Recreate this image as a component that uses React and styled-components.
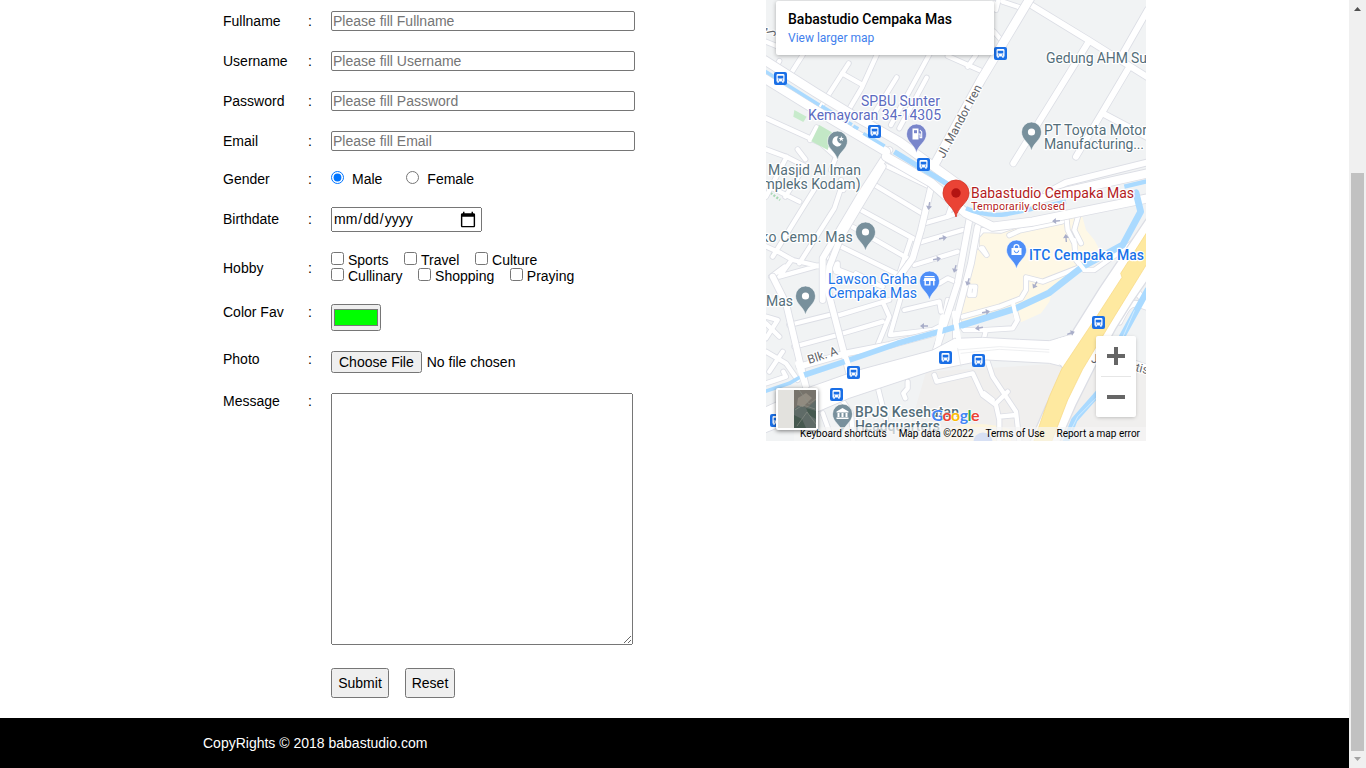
import React from "react";
import styled, { createGlobalStyle } from "styled-components";

const GlobalStyle = createGlobalStyle`
  html, body { margin: 0; padding: 0; height: 100%; overflow: hidden; background: #fff; }
  body, input, textarea, button { font-family: "Liberation Sans", Arial, sans-serif; font-size: 14px; }
`;

const Page = styled.div`
  display: flex;
  width: 1366px;
  height: 768px;
`;
const Content = styled.div`
  flex: 1;
  display: flex;
  flex-direction: column;
`;
const Main = styled.main`
  height: 718px;
  display: flex;
  padding-left: 223px;
  box-sizing: border-box;
`;
const Form = styled.form`
  width: 543px;
  padding-top: 1px;
  box-sizing: border-box;
`;
const Row = styled.div`
  display: grid;
  grid-template-columns: 85px 23px 1fr;
  align-items: start;
  height: ${(p) => p.$height}px;
  line-height: 16px;
  color: #000;
`;
const Label = styled.label`
  padding-top: ${(p) => p.$top}px;
`;
const Field = styled.div`
  padding-top: ${(p) => p.$top}px;
  white-space: nowrap;
`;
const TextInput = styled.input`
  display: block;
  box-sizing: border-box;
  width: 304px;
  height: 20px;
  padding: 0;
  border: 1px solid #767676;
  border-radius: 2px;
  text-indent: 1px;
`;
const DateInput = styled.input`
  display: block;
  box-sizing: border-box;
  width: 151px;
  height: 25px;
  padding: 0 3px 0 0;
  &::-webkit-datetime-edit { position: relative; top: -1px; }
  &::-webkit-calendar-picker-indicator { width: 18px; height: 18px; padding: 0; margin: 0; }
`;
const ColorInput = styled.input`
  display: block;
  box-sizing: border-box;
  width: 50px;
  height: 27px;
  padding: 0;
  &::-webkit-color-swatch-wrapper { padding: 4px 2px; }
`;
const FileInput = styled.input`
  display: block;
  width: 304px;
  height: 22px;
  &::file-selector-button { margin-right: 5px; padding-left: 6px; padding-right: 6px; }
`;
const Message = styled.textarea`
  display: block;
  box-sizing: border-box;
  width: 302px;
  height: 252px;
`;
const Choice = styled.label`
  display: inline-block;
  margin-right: ${(p) => p.$after}px;
  input { margin: 0 ${(p) => p.$gap}px 0 0; vertical-align: ${(p) => p.$raise || 0}px; }
`;
const ChoiceLine = styled.div`
  height: 16px;
`;
const Buttons = styled.div`
  display: flex;
  gap: 16px;
`;
const Button = styled.button`
  height: 30px;
  width: ${(p) => p.$width}px;
  padding: 0;
`;
const Footer = styled.footer`
  height: 50px;
  line-height: 50px;
  background: #000;
  color: #fff;
  padding-left: 203px;
`;

const Scrollbar = styled.aside`
  width: 17px;
  height: 768px;
  background: #f0f0f0;
  display: flex;
  flex-direction: column;
  align-items: center;
  svg { display: block; }
`;
const Thumb = styled.div`
  width: 13px;
  height: 578px;
  margin-top: 156px;
  background: #c1c1c1;
`;

const MapFrame = styled.section`
  position: relative;
  width: 380px;
  height: 441px;
  overflow: hidden;
  font-family: Roboto, sans-serif;
  & > svg { display: block; }
`;
const PlaceCard = styled.div`
  position: absolute;
  left: 10px;
  top: 1px;
  width: 218px;
  height: 54px;
  box-sizing: border-box;
  padding: 10px 12px;
  background: #fff;
  border-radius: 2px;
  box-shadow: 0 1px 4px rgba(0, 0, 0, 0.3);
`;
const PlaceName = styled.div`
  font-size: 14px;
  line-height: 16px;
  font-weight: 500;
  color: #000;
  white-space: nowrap;
`;
const PlaceLink = styled.div`
  margin-top: 3px;
  font-size: 12px;
  line-height: 16px;
  color: #427fed;
`;
const ZoomPanel = styled.div`
  position: absolute;
  left: 330px;
  top: 336px;
  width: 40px;
  height: 81px;
  background: #fff;
  border-radius: 2px;
  box-shadow: 0 1px 4px -1px rgba(0, 0, 0, 0.3);
`;
const Satellite = styled.div`
  position: absolute;
  left: 10px;
  top: 388px;
  width: 38px;
  height: 38px;
  border: 2px solid #fff;
  border-radius: 2px;
  box-shadow: 0 1px 4px rgba(0, 0, 0, 0.5);
  background: #e3e2de;
  svg { display: block; }
`;
const Attribution = styled.div`
  position: absolute;
  right: 0;
  bottom: 0;
  width: 352px;
  height: 14px;
  box-sizing: border-box;
  display: flex;
  justify-content: space-between;
  padding: 0 6px;
  line-height: 14px;
  font-size: 10px;
  color: #000;
  background: rgba(245, 245, 245, 0.7);
  white-space: nowrap;
`;

/* The street geometry is drawn on a 1140 x 1323 grid, three units to a pixel. */
const lanes = [
  "M0 125 L45 143 M40 183 L28 205 M110 165 L72 225",
  "M248 190 L158 330 M228 220 L290 255 M332 165 L288 262 L245 335 M392 232 L322 345 M492 160 L375 375 M482 233 L400 385",
  "M700 -10 L690 30 L684 10 M710 5 L770 25 M684 95 L712 128 M545 168 L645 212 M630 165 L605 200",
  "M0 355 L165 430 L210 470 L195 510 M132 420 L152 382",
  "M0 448 L60 470 L120 500 M95 448 L118 478 M62 470 L0 590 M112 505 L58 590 M0 555 L100 605 M150 560 L100 640 L20 770",
  "M225 565 L205 625 L100 790 M225 540 L232 570",
  "M-5 737 L45 760 L80 780 L165 800 M78 778 L40 830 L165 795 M55 800 L15 830",
  "M345 490 L495 562 M318 550 L468 640 M285 630 L450 720 M250 675 L425 775 M215 735 L400 825",
  "M185 770 L220 810 L350 860 M215 790 L215 815 M270 820 L330 850 L210 815 M190 800 L300 845",
  "M468 672 L545 650 L572 640 M555 620 L545 650 M462 727 L590 690 M445 795 L575 755 M435 715 L400 820",
  "M520 850 L545 835 L580 850 M415 930 L520 905 L525 935 M405 890 L372 1005 L500 990 L530 975 L545 900",
  "M350 905 L370 950 L335 1035 M205 950 L370 900 M70 975 L190 945 M85 1040 L215 1005 M215 1005 L350 965",
  "M0 970 L40 1010 M0 950 L35 960 L0 1015 M0 1055 L60 1090 L95 1140 M50 1055 L10 1115 M0 1150 L60 1130 L52 1115",
  "M650 690 L705 692 L740 680 M632 740 L632 710 L650 690 M650 745 L662 765 L645 745",
  "M730 706 L760 692 L888 665 M900 640 L905 690 L925 730 L930 780 L955 810 L985 810 L1140 700 M940 635 L925 690 L945 730",
  "M945 800 L830 845 L780 832 L780 870 L765 895 L700 920 L590 950 M745 925 L755 960 L740 985 L660 990 L595 990 L575 960 M660 990 L655 1010",
  "M612 860 L628 860 L625 885 L610 885 Z",
  "M505 1125 L512 1145 L620 1120 L650 1185 L690 1215 L700 1260 L700 1323 M665 1085 L680 1130 L750 1235 L760 1323 M725 1175 L688 1212 M700 1250 L750 1245 M655 1180 L680 1200",
  "M425 1145 L425 1165 L412 1180 L418 1195 M335 1160 L345 1200 L360 1260 M225 1195 L255 1240 L262 1323 M170 1240 L200 1323",
];
const streets = [
  "M370 450 L280 590 L170 775 L170 900",
  "M350 500 L225 710 L190 800 L185 870 L250 1120",
  "M495 562 L465 690 L440 775 L400 830",
  "M20 830 L60 910 L100 1080 L130 1200",
  "M100 1100 L240 1060 L370 1035 L500 1000",
  "M610 660 L575 850 L510 1050 M635 680 L615 790 L570 960 L570 1050",
  "M1140 920 C1090 895 1080 925 1060 965 M980 1090 C1040 1075 1090 1080 1145 1105 M1100 860 L1145 915",
  "M795 15 L970 122 L1145 232 M1145 30 L1068 165 M970 122 L742 490 M1090 200 L930 470 M1010 340 L1145 412",
  "M1145 487 L900 548 L840 580",
];
const avenues = [
  "M-5 180 L150 278 L260 345 L400 425 L600 570",
  "M795 -10 L645 240 L505 495",
  "M-5 235 L140 325 L270 402 L360 455",
  "M360 470 L495 548 L600 640 L680 680 L800 665 L1145 595 M1145 520 L900 575 L780 610",
];
const boulevard = "M-5 1222 L120 1165 L270 1112 L500 1050 L565 1015 L650 1012 L760 1018 L850 1022 L925 1000 L890 1100 L850 1090 L660 1080 L500 1112 L250 1195 L150 1238 L-5 1300 Z";

const Roads = ({ paths, width }) => (
  <>
    <g stroke="#dcdee5" strokeWidth={width + 5}>{paths.map((d) => <path key={d} d={d} />)}</g>
    <g stroke="#fff" strokeWidth={width}>{paths.map((d) => <path key={d} d={d} />)}</g>
  </>
);

const BusStop = ({ x, y }) => (
  <g transform={`translate(${x} ${y})`}>
    <rect x="-6.5" y="-6.5" width="13" height="13" rx="2" fill="#1a6fe6" />
    <path d="M-4 -3.2 Q-4 -4.5 -2.6 -4.5 H2.6 Q4 -4.5 4 -3.2 V3 H3.2 V4.3 H1.7 V3 H-1.7 V4.3 H-3.2 V3 H-4 Z" fill="#fff" />
    <path d="M-2.8 -2.8 H2.8 V0 H-2.8 Z M-2.6 1 H-1.4 V2.1 H-2.6 Z M1.4 1 H2.6 V2.1 H1.4 Z" fill="#1a6fe6" />
  </g>
);

const Pin = ({ x, y, color = "#78909c", children }) => (
  <g transform={`translate(${x - 0.5} ${y})`}>
    <path d="M0 19 C-1.5 11 -10 8 -10 0 A10 10 0 0 1 10 0 C10 8 1.5 11 0 19 Z" fill={color} stroke="#fff" strokeWidth="0.6" />
    {children || <circle r="3.6" fill="#fff" />}
  </g>
);

const PlaceText = ({ x, y, w, size = 14, weight = 400, color = "#546e7a", children, ...rest }) => (
  <text x={x} y={y} textLength={w} fontSize={size} fontWeight={weight} fill={color}
    stroke="#fff" strokeWidth="2.4" strokeLinejoin="round" paintOrder="stroke" {...rest}>
    {children}
  </text>
);

const Arrow = ({ x, y, r }) => (
  <path transform={`translate(${x} ${y}) rotate(${r})`} d="M-4 -0.7 H0 V-3 L4 0 L0 3 V0.7 H-4 Z" fill="#a9aec9" />
);

const StreetMap = () => (
  <svg width="380" height="441" viewBox="766 0 380 441" fontFamily="Roboto, sans-serif">
    <rect x="766" width="380" height="441" fill="#f1f3f4" />
    <g transform="translate(766 0) scale(0.33333)" fill="none" strokeLinecap="round" strokeLinejoin="round">
      <path d="M480 1115 L900 1090 L800 1323 H420 Z M980 1105 L1140 1110 V1323 H880 Z" fill="#f0efee" />
      <path d="M650 672 L880 650 L945 635 L960 690 L985 720 L1000 748 L950 800 L860 870 L850 905 L825 940 L765 967 L740 930 L580 965 L600 870 L630 740 Z" fill="#fef8e6" />
      <path d="M535 1290 Q620 1255 735 1288 V1323 H535 Z" fill="#fdf5dc" />
      <path d="M85 330 L122 350 L112 366 L82 350 Z" fill="#c8ebcc" />
      <path d="M5 572 L42 600" stroke="#a8d8b4" strokeWidth="7" strokeDasharray="6 5" strokeLinecap="butt" />

      <Roads paths={lanes} width={13} />
      <Roads paths={streets} width={18} />
      <path d={boulevard} fill="#fff" stroke="#dcdee5" strokeWidth="3" />
      <Roads paths={avenues} width={25} />
      <path d="M160 375 L200 398 L185 450 L136 424 Z" fill="#c3e8c6" />

      <g stroke="#aadaff">
        <path d="M-5 212 L160 315 M166 318 L258 374 M262 378 L277 386 M292 400 L356 438" strokeWidth="10" strokeLinecap="butt" />
        <path d="M385 455 L560 562" strokeWidth="16" strokeLinecap="butt" />
        <path d="M600 625 Q660 652 725 642 L900 605 M1075 560 L1145 543" strokeWidth="13" strokeLinecap="butt" />
        <path d="M1110 578 L1124 635 L1070 735 L950 800 L850 878 L750 925 L590 975" strokeWidth="20" />
        <path d="M590 975 L545 988 L395 1030 L265 1075 L115 1125" strokeWidth="17" />
        <path d="M118 1122 L70 1150 L-5 1175" strokeWidth="11" />
        <path d="M1145 870 L1068 1010 M900 1323 L925 1260 L1040 1130" strokeWidth="19" />
      </g>
      <path d="M1105 932 L1072 1008 M905 1310 L935 1250 L1040 1145" stroke="#e6f4ff" strokeWidth="2" />
      <g stroke="#fff" strokeWidth="15">
        <path d="M530 950 L515 1030 M565 940 L580 1030 M235 1060 L255 1115 M95 1090 L125 1180" />
        <path d="M925 720 L932 780 L955 810 M740 905 L752 960" strokeWidth="12" />
      </g>
      <path d="M575 1050 L700 1040 L870 1050 M585 1060 L700 1048 L875 1058 M575 1045 L585 1100" stroke="#e6e7ea" strokeWidth="2" />

      <path d="M1145 650 L1000 865 L925 985 L870 1078 L895 1112 L840 1215 L792 1325 H882 L930 1215 L990 1095 L1050 985 L1100 905 L1145 840 Z" fill="#fff" stroke="#dcdee5" strokeWidth="4" />
      <path d="M880 1015 L915 1005 L905 1060 L885 1095 L850 1085 V1030 Z" fill="#fff" />
      <path d="M1145 693 L1064 820 L1068 832 L985 960 L887 1107 L850 1190 L803 1325 H857 L905 1200 L950 1108 L1045 950 L1145 788 Z" fill="#fee9a0" stroke="#f8d77d" strokeWidth="2" />
    </g>

    <Arrow x={929} y={206} r={100} /><Arrow x={943} y={238} r={-10} /><Arrow x={937} y={259} r={-10} />
    <Arrow x={1056} y={221} r={175} /><Arrow x={1066} y={238} r={-95} /><Arrow x={1035} y={285} r={120} />
    <Arrow x={968} y={282} r={108} /><Arrow x={955} y={269} r={105} /><Arrow x={924} y={326} r={180} />
    <Arrow x={986} y={312} r={-10} /><Arrow x={979} y={328} r={170} /><Arrow x={1071} y={333} r={-20} />

    <Pin x={838} y={141}>
      <path d="M1 -4.6 A5 5 0 1 0 4.4 2.6 A4.2 4.2 0 0 1 1 -4.6 Z" fill="#fff" />
      <path d="M3.8 -5 L4.5 -3 L6.5 -2.9 L4.9 -1.7 L5.5 .3 L3.8 -.9 L2.1 .3 L2.7 -1.7 L1.1 -2.9 L3.1 -3 Z" fill="#fff" />
    </Pin>
    <Pin x={917} y={134} color="#7986cb">
      <path d="M-4 -5.5 H2 V5.5 H-4 Z" fill="#fff" />
      <path d="M2 0 H3.6 V3.6 H5.2 V-2 L3.4 -4" fill="none" stroke="#fff" strokeWidth="1.1" />
      <path d="M-2.5 -3.8 H.5 V-.8 H-2.5 Z" fill="#7986cb" />
    </Pin>
    <Pin x={1032} y={132} />
    <Pin x={866} y={232} />
    <Pin x={806} y={296} />
    <Pin x={930} y={281} color="#4e8ef7">
      <path d="M-5 -5 H5 V-3.8 H-5 Z M-5.2 -3 H5.2 L6 0 H5 V4.6 H3.6 V0 H1 V4.6 H-5 V0 H-6 Z M-3.6 0 V3.2 H-.4 V0 Z" fill="#fff" fillRule="evenodd" />
    </Pin>
    <Pin x={1017} y={250} color="#4e8ef7">
      <path d="M-5 -2 H5 V5 H-5 Z" fill="#fff" />
      <path d="M-2.4 -2 V-3 A2.4 2.4 0 0 1 2.4 -3 V-2" fill="none" stroke="#fff" strokeWidth="1.3" />
      <path d="M-2.2 .5 A2.2 2.2 0 0 0 2.2 .5" fill="none" stroke="#4e8ef7" />
    </Pin>
    <Pin x={843} y={414}>
      <path d="M-6 -2.6 L0 -6 L6 -2.6 V-1.5 H-6 Z M-5 -1 H-3 V3 H-5 Z M-1 -1 H1 V3 H-1 Z M3 -1 H5 V3 H3 Z M-6 3.4 H6 V5 H-6 Z" fill="#fff" />
    </Pin>

    <BusStop x={780.5} y={78.5} /><BusStop x={874.5} y={131.5} /><BusStop x={1000.5} y={53.5} />
    <BusStop x={923.5} y={164.5} /><BusStop x={945.5} y={357.5} /><BusStop x={978.5} y={360.5} />
    <BusStop x={853.5} y={372.5} /><BusStop x={836.5} y={394.5} /><BusStop x={1098.5} y={322.5} />
    <BusStop x={776.5} y={420.5} />
    <circle cx="983" cy="442" r="9.5" fill="#8fb0f0" />

    <PlaceText x={861} y={106} w={79} color="#5c6bc0">SPBU Sunter</PlaceText>
    <PlaceText x={808} y={120} w={133} color="#5c6bc0">Kemayoran 34-14305</PlaceText>
    <PlaceText x={1046} y={63} w={125}>Gedung AHM Sunter</PlaceText>
    <PlaceText x={1044} y={135} w={103}>PT Toyota Motor</PlaceText>
    <PlaceText x={1044} y={149} w={100}>Manufacturing...</PlaceText>
    <PlaceText x={768} y={175} w={93}>Masjid Al Iman</PlaceText>
    <PlaceText x={741} y={189} w={119.5}>(Kompleks Kodam)</PlaceText>
    <PlaceText x={853} y={242} textAnchor="end" letterSpacing="0.2">Ruko Cemp. Mas</PlaceText>
    <PlaceText x={766} y={306} w={27}>Mas</PlaceText>
    <PlaceText x={828} y={284} w={89} color="#1a73e8">Lawson Graha</PlaceText>
    <PlaceText x={828} y={298} w={89} color="#1a73e8">Cempaka Mas</PlaceText>
    <PlaceText x={1029} y={260} w={115} weight={500} color="#1a73e8">ITC Cempaka Mas</PlaceText>
    <PlaceText x={855} y={417} w={104} weight={500}>BPJS Kesehatan</PlaceText>
    <PlaceText x={855} y={431} w={85} weight={500}>Headquarters</PlaceText>
    <PlaceText x={0} y={0} w={81} size={12} color="#5f6368" transform="translate(944 159) rotate(-62)">Jl. Mandor Iren</PlaceText>
    <PlaceText x={0} y={0} w={31} size={12} color="#5f6368" transform="translate(809 364) rotate(-18)">Blk. A</PlaceText>
    <PlaceText x={0} y={0} size={12} color="#5f6368" transform="translate(766 34) rotate(-72)">a</PlaceText>
    <PlaceText x={0} y={0} size={12} color="#5f6368" transform="translate(776 36) rotate(-100)">J</PlaceText>
    <PlaceText x={1091} y={363} size={12} color="#5f6368">J</PlaceText>
    <PlaceText x={0} y={0} size={12} color="#5f6368" transform="translate(1135 371) rotate(14)">tis</PlaceText>

    <path d="M956 217 C954 206 943 203 943 193 A13 13 0 0 1 969 193 C969 203 958 206 956 217 Z" fill="#ea4335" stroke="#d33426" strokeWidth=".8" />
    <circle cx="956" cy="193" r="4.7" fill="#b31412" />
    <PlaceText x={971} y={198} w={163} color="#b31b22">Babastudio Cempaka Mas</PlaceText>
    <PlaceText x={971} y={210} w={94} size={11} color="#b31b22">Temporarily closed</PlaceText>

    <text x="931.5" y="420.5" fontSize="16" fontWeight="700" fontFamily="Lato, sans-serif" textLength="48"
      stroke="#fff" strokeWidth="1.2" paintOrder="stroke">
      <tspan fill="#4285f4">G</tspan><tspan fill="#ea4335">o</tspan><tspan fill="#fbbc04">o</tspan><tspan fill="#4285f4">g</tspan><tspan fill="#34a853">l</tspan><tspan fill="#ea4335">e</tspan>
    </text>
  </svg>
);

const MapPanel = () => (
  <MapFrame>
    <StreetMap />
    <PlaceCard>
      <PlaceName>Babastudio Cempaka Mas</PlaceName>
      <PlaceLink>View larger map</PlaceLink>
    </PlaceCard>
    <ZoomPanel>
      <svg width="40" height="81">
        <path d="M11 20 H29 M20 11 V29 M11 61 H29" stroke="#666" strokeWidth="4" />
        <path d="M5 40.5 H35" stroke="#e6e6e6" />
      </svg>
    </ZoomPanel>
    <Attribution>
      <span>Keyboard shortcuts</span>
      <span>Map data ©2022</span>
      <span>Terms of Use</span>
      <span>Report a map error</span>
    </Attribution>
    <Satellite>
      <svg width="38" height="38">
        <rect x="16" width="22" height="38" fill="#5f6b67" />
        <path d="M16 0 H38 V10 L29 18 L22 14 L16 19 Z" fill="#77736b" />
        <path d="M20 8 L28 3 L34 8 L25 17 L19 15 Z" fill="#918b80" />
        <path d="M16 25 L24 29 L28 38 H16 Z M28 18 L38 21 V29 L31 25 Z" fill="#46594f" />
        <path d="M17 20 L25 15 L37 19 M19 36 L29 22 L38 34 M21 0 L31 14 L38 9" stroke="#8d9288" strokeWidth=".6" fill="none" />
      </svg>
    </Satellite>
  </MapFrame>
);

const FormRow = ({ label, height, labelTop, fieldTop, children }) => (
  <Row $height={height}>
    <Label $top={labelTop}>{label}</Label>
    <Label as="span" $top={labelTop}>{label ? ":" : ""}</Label>
    <Field $top={fieldTop}>{children}</Field>
  </Row>
);

const textFields = ["Fullname", "Username", "Password", "Email"];
const hobbies = [["Sports", "Travel", "Culture"], ["Cullinary", "Shopping", "Praying"]];

export default function App() {
  return (
    <Page>
      <GlobalStyle />
      <Content>
        <Main>
          <Form onSubmit={(e) => e.preventDefault()}>
            {textFields.map((name) => (
              <FormRow key={name} label={name} height={40} labelTop={12} fieldTop={10}>
                <TextInput type={name === "Password" ? "password" : "text"} placeholder={`Please fill ${name}`} />
              </FormRow>
            ))}
            <FormRow label="Gender" height={38} labelTop={10} fieldTop={10}>
              <Choice $gap={8} $after={24} $raise={0}><input type="radio" name="gender" defaultChecked />Male</Choice>
              <Choice $gap={8} $after={0} $raise={0}><input type="radio" name="gender" />Female</Choice>
            </FormRow>
            <FormRow label="Birthdate" height={45} labelTop={12} fieldTop={8}>
              <DateInput type="date" />
            </FormRow>
            <FormRow label="Hobby" height={50} labelTop={16} fieldTop={8}>
              {hobbies.map((line) => (
                <ChoiceLine key={line[0]}>
                  {line.map((h) => (
                    <Choice key={h} $gap={4} $after={15.6}><input type="checkbox" />{h}</Choice>
                  ))}
                </ChoiceLine>
              ))}
            </FormRow>
            <FormRow label="Color Fav" height={47} labelTop={10} fieldTop={10}>
              <ColorInput type="color" defaultValue="#00ff00" />
            </FormRow>
            <FormRow label="Photo" height={42} labelTop={10} fieldTop={10}>
              <FileInput type="file" />
            </FormRow>
            <FormRow label="Message" height={275} labelTop={10} fieldTop={10}>
              <Message />
            </FormRow>
            <FormRow height={40} fieldTop={10}>
              <Buttons>
                <Button type="submit" $width={58}>Submit</Button>
                <Button type="reset" $width={50}>Reset</Button>
              </Buttons>
            </FormRow>
          </Form>
          <MapPanel />
        </Main>
        <Footer>CopyRights © 2018 babastudio.com</Footer>
      </Content>
      <Scrollbar>
        <svg width="17" height="17"><path d="M5 11 L8.5 7 L12 11 Z" fill="#505050" /></svg>
        <Thumb />
        <svg width="17" height="17"><path d="M5 6 L8.5 10 L12 6 Z" fill="#a3a3a3" /></svg>
      </Scrollbar>
    </Page>
  );
}
